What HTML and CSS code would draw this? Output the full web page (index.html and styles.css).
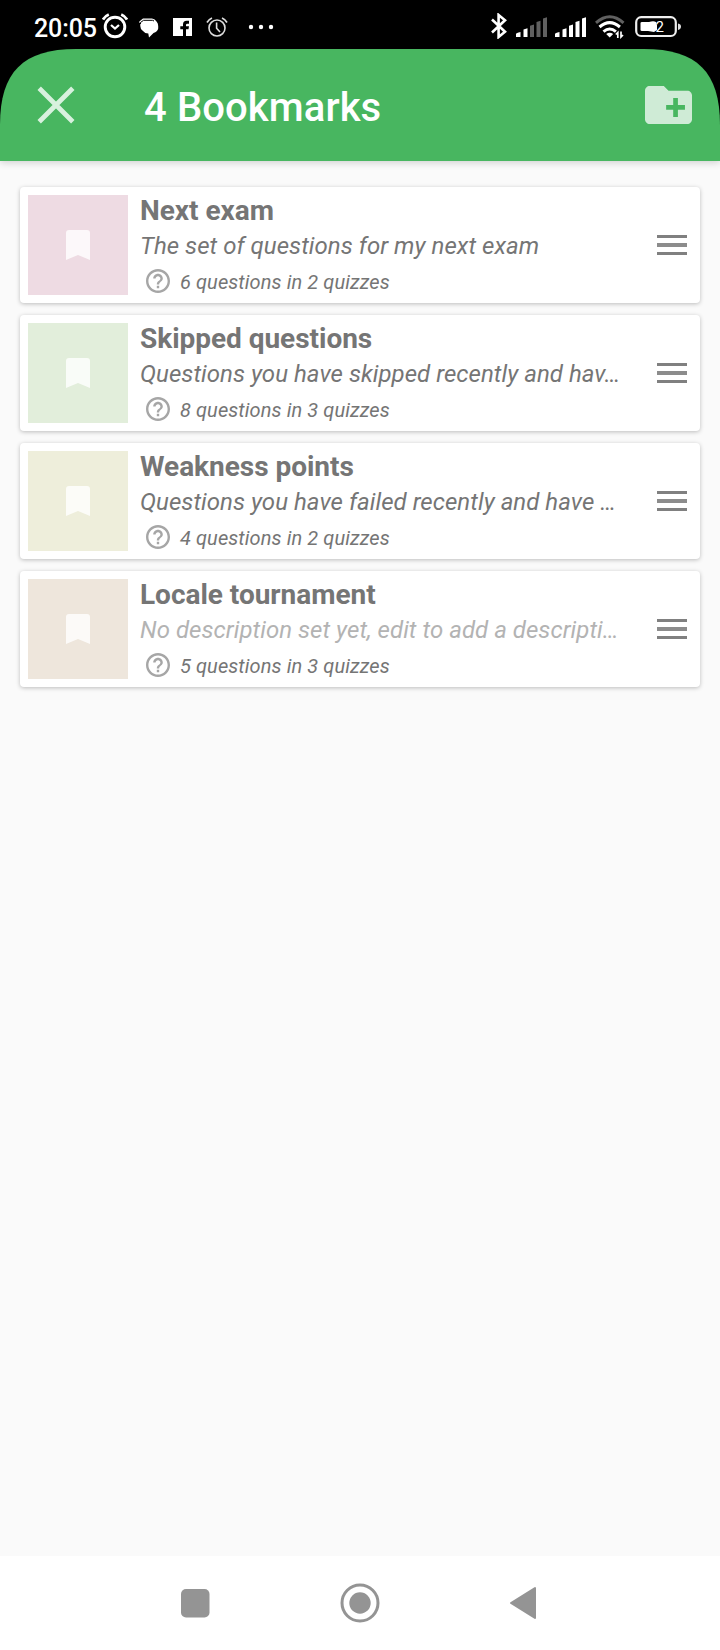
FILE: index.html
```
<!DOCTYPE html>
<html lang="en">
<head>
<meta charset="utf-8">
<title>Bookmarks</title>
<link rel="stylesheet" href="styles.css">
</head>
<body>
<svg class="defs" width="0" height="0">
  <symbol id="bookmark" viewBox="0 0 24 30"><path d="M3 0H21Q24 0 24 3V30L12 25L0 30V3Q0 0 3 0Z"/></symbol>
  <symbol id="help" viewBox="2 2 20 20"><path d="M11 18h2v-2h-2v2zm1-16C6.48 2 2 6.48 2 12s4.48 10 10 10 10-4.48 10-10S17.52 2 12 2zm0 18c-4.41 0-8-3.59-8-8s3.59-8 8-8 8 3.59 8 8-3.59 8-8 8zm0-14c-2.21 0-4 1.79-4 4h2c0-1.1.9-2 2-2s2 .9 2 2c0 2-3 1.75-3 5h2c0-2.25 3-2.5 3-5 0-2.21-1.79-4-4-4z"/></symbol>
</svg>
<div class="screen">
  <div class="top">
    <div class="status">
      <span class="clock">20:05</span>
      <svg class="s-alarm" width="26" height="26" viewBox="0 0 26 26" fill="none" stroke="#fff"><circle cx="13" cy="14" r="9.800" stroke-width="2.900"/><path d="M9 12l4 3.500 4-3.500" stroke-width="2.300"/><path d="M1 6.500Q3 3.100 6.800 1.500M25 6.500Q23 3.100 19.200 1.500" stroke-width="2.800"/></svg>
      <svg class="s-chat" width="20" height="20" viewBox="0 0 20 20"><path d="M4 .5H13Q16 1 17.500 3.500Q19.200 5 19.200 8V10.500Q18.500 13.500 14.500 15L10 19.500L9.300 15.500Q6 15.500 4 13Q1.300 11.500 1.300 8V4.500L.3 5V3.500Z" fill="#fff"/><path d="M1.500 6V4.500L4.500 2.300H13.500L15 3" fill="none" stroke="#000" stroke-width="1"/></svg>
      <svg class="s-fb" width="19" height="18" viewBox="0 0 19 18"><path d="M0 0H19V18H0Z" fill="#fff"/><path d="M10 18V11.300H7.300V8.300H10V6.500Q10 2.800 13.600 2.800H16V5.700H14.300Q13 5.700 13 7V8.300H16L15.500 11.300H13V18Z" fill="#000"/></svg>
      <svg class="s-alarm2" width="22" height="20" viewBox="0 0 22 20" fill="none" stroke="#ddd"><circle cx="11" cy="11" r="8" stroke-width="1.600"/><path d="M10.600 5.500V11.200L14 15" stroke-width="1.600"/><path d="M1 5.500Q2.600 2.500 6 1M21 5.500Q19.400 2.500 16 1" stroke-width="1.700"/></svg>
      <svg class="s-dots" width="26" height="6" viewBox="0 0 26 6" fill="#fff"><circle cx="3" cy="3" r="2.200"/><circle cx="13" cy="3" r="2.200"/><circle cx="23" cy="3" r="2.200"/></svg>
      <span class="fill"></span>
      <svg class="s-bt" width="18" height="26" viewBox="0 0 18 26" fill="none" stroke="#fff" stroke-width="2.600"><path d="M2 6.500L15 18.700L8.600 24V2L15 7.300L2 19.500"/></svg>
      <svg class="s-sig" width="32" height="20" viewBox="0 0 32 20"><path d="M0 17Q0 16 4.500 15V20H0Z M7.500 12.500L11.500 11.300V20H7.500Z" fill="#fff"/><path d="M14 8.700L18 7.500V20H14Z M20.500 5L24.500 3.800V20H20.500Z M27 1.500L31 .3V20H27Z" fill="#606060"/></svg>
      <svg class="s-sig2" width="32" height="20" viewBox="0 0 32 20" fill="#fff"><path d="M0 17Q0 16 4.500 15V20H0Z M7.500 12.500L11.500 11.300V20H7.500Z M14 8.700L18 7.500V20H14Z M20.500 5L24.500 3.800V20H20.500Z M27 1.500L31 .3V20H27Z"/></svg>
      <svg class="s-wifi" width="30" height="24" viewBox="0 0 30 24" fill="none" stroke="#fff" stroke-width="3"><path d="M1 7.800Q14.700-4.200 28.500 7.800" stroke="#606060"/><path d="M4.500 12Q14.700 3.200 24.900 12M8.500 16.600Q14.700 11.400 20.900 16.600"/><path d="M14.700 22.500L11.200 19Q14.700 16.400 18.200 19Z" fill="#fff" stroke="none"/><path d="M22.800 23V17.500L20.800 19.500M26 16.500V22L28 20" stroke-width="1.700"/></svg>
      <svg class="s-bat" width="47" height="22" viewBox="0 0 47 22"><rect x="1.200" y="1.200" width="39.600" height="18.800" rx="5" fill="none" stroke="#eee" stroke-width="2.200"/><path d="M43 7.500Q46 8 46 10.500T43 14Z" fill="#ddd"/><path d="M5.500 7Q5.500 6 7 6H14Q18.500 4.500 21 6L22 9V14L19 16L13 15H7Q5.500 15 5.500 14Z" fill="#fff"/><text x="20.500" y="15.700" class="pct">2</text></svg>
    </div>
    <header class="bar">
      <svg class="close" width="38" height="38" viewBox="0 0 38 38"><path d="M2.200 2.200L35.800 35.800M35.800 2.200L2.200 35.800" stroke="#d8f1de" stroke-width="4.800"/></svg>
      <h1>4 Bookmarks</h1>
      <svg class="folder" width="47" height="38" viewBox="2 4 20 16" preserveAspectRatio="none"><path fill="#cfebd6" d="M20 6h-8l-2-2H4c-1.110 0-1.990.89-1.990 2L2 18c0 1.110.89 2 2 2h16c1.110 0 2-.89 2-2V8c0-1.110-.89-2-2-2zm-1 8h-3v3h-2v-3h-3v-2h3V9h2v3h3v2z"/></svg>
    </header>
  </div>
  <main class="list">
    <article class="card">
      <div class="thumb pink"><svg width="24" height="30"><use href="#bookmark"/></svg></div>
      <div class="body"><h2>Next exam</h2><p class="desc">The set of questions for my next exam</p><p class="count"><svg width="24" height="24"><use href="#help"/></svg><span>6 questions in 2 quizzes</span></p></div>
      <span class="handle"><i></i><i></i><i></i></span>
    </article>
    <article class="card">
      <div class="thumb green"><svg width="24" height="30"><use href="#bookmark"/></svg></div>
      <div class="body"><h2>Skipped questions</h2><p class="desc">Questions you have skipped recently and hav…</p><p class="count"><svg width="24" height="24"><use href="#help"/></svg><span>8 questions in 3 quizzes</span></p></div>
      <span class="handle"><i></i><i></i><i></i></span>
    </article>
    <article class="card">
      <div class="thumb yellow"><svg width="24" height="30"><use href="#bookmark"/></svg></div>
      <div class="body"><h2>Weakness points</h2><p class="desc">Questions you have failed recently and have …</p><p class="count"><svg width="24" height="24"><use href="#help"/></svg><span>4 questions in 2 quizzes</span></p></div>
      <span class="handle"><i></i><i></i><i></i></span>
    </article>
    <article class="card">
      <div class="thumb orange"><svg width="24" height="30"><use href="#bookmark"/></svg></div>
      <div class="body"><h2>Locale tournament</h2><p class="desc empty">No description set yet, edit to add a descripti…</p><p class="count"><svg width="24" height="24"><use href="#help"/></svg><span>5 questions in 3 quizzes</span></p></div>
      <span class="handle"><i></i><i></i><i></i></span>
    </article>
  </main>
  <nav class="nav">
    <svg width="30" height="30" viewBox="0 0 30 30"><rect x="1" y="1" width="28.500" height="28.500" rx="5" fill="#949494"/></svg>
    <svg width="40" height="40" viewBox="0 0 40 40"><circle cx="20" cy="20" r="18" fill="none" stroke="#949494" stroke-width="3"/><circle cx="20" cy="20" r="10.700" fill="#949494"/></svg>
    <svg width="28" height="34" viewBox="0 0 28 34"><path d="M26 2V32L2 17Z" fill="#949494" stroke="#949494" stroke-width="2" stroke-linejoin="round"/></svg>
  </nav>
</div>
</body>
</html>
```
FILE: styles.css
```
* { box-sizing: border-box; }
body, h1, h2, p { margin: 0; }
body { font-family: Roboto, "Liberation Sans", sans-serif; background: #fafafa; }
.defs { display: block; height: 0; }
svg { flex: none; display: block; }
.screen { width: 720px; height: 1650px; display: flex; flex-direction: column; overflow: hidden; }

.top { background: #000; box-shadow: 0 2px 7px rgba(0, 0, 0, .16); }
.status { height: 49px; display: flex; align-items: flex-start; padding-left: 34px; color: #fff; }
.clock { font-size: 25px; font-weight: 500; line-height: 30px; margin-top: 14px; width: 67px; white-space: nowrap; letter-spacing: -.1px; }
.s-alarm { margin: 13px 0 0 1px; }
.s-chat { margin: 18px 0 0 11px; }
.s-fb { margin: 18px 0 0 14px; }
.s-alarm2 { margin: 17px 0 0 14px; }
.s-dots { margin: 24px 0 0 20px; }
.fill { flex: 1; }
.s-bt { margin-top: 13px; }
.s-sig { margin: 17px 0 0 8px; }
.s-sig2 { margin: 17px 0 0 7px; }
.s-wifi { margin: 15px 0 0 8px; }
.s-bat { margin: 16px 38px 0 10px; }
.pct { font: 15px Roboto, sans-serif; fill: #fff; }

.bar {
  height: 112px; display: flex; align-items: center; background: #48b660;
  padding: 0 28px 0 37px;
  clip-path: path("M0 76C0 23 23 0 76 0H644C697 0 720 23 720 76V112H0Z");
}
.bar h1 { flex: 1; margin-left: 69px; font-size: 40px; font-weight: 500; line-height: 48px; color: #fff; padding-top: 6px; letter-spacing: .1px; }

.list { flex: 1; display: flex; flex-direction: column; gap: 12px; padding: 26px 20px; }
.card {
  height: 116px; display: flex; align-items: center; background: #fff; border-radius: 4px;
  padding: 0 13px 0 8px; box-shadow: 0 1px 4px rgba(0, 0, 0, .25);
}
.thumb { width: 100px; height: 100px; display: flex; align-items: center; justify-content: center; fill: rgba(255, 255, 255, .8); }
.pink { background: #eedbe3; }
.green { background: #e2eedb; }
.yellow { background: #eeeedb; }
.orange { background: #eee6dc; }
.body { flex: 1; height: 100%; padding: 6px 0 0 12px; color: #757575; white-space: nowrap; }
.body h2 { font-size: 28px; line-height: 36px; font-weight: 700; letter-spacing: -.03px; }
.desc { font-size: 24px; line-height: 32px; font-style: italic; padding-top: 1px; letter-spacing: .045px; }
.desc.empty { color: #b3b3b3; }
.count { display: flex; align-items: center; gap: 10px; margin-top: 6px; padding-left: 6px; font-size: 20px; line-height: 24px; font-style: italic; letter-spacing: .09px; fill: #a6a6a6; }
.count span { padding-top: 2px; }
.handle { width: 30px; height: 20px; display: flex; flex-direction: column; justify-content: space-between; }
.handle i { height: 3px; background: #808080; }
.handle i:nth-child(2) { height: 4px; background: #8c8c8c; }

.nav { height: 94px; background: #fff; display: flex; align-items: center; justify-content: space-between; padding: 0 183px 0 180px; }
```
